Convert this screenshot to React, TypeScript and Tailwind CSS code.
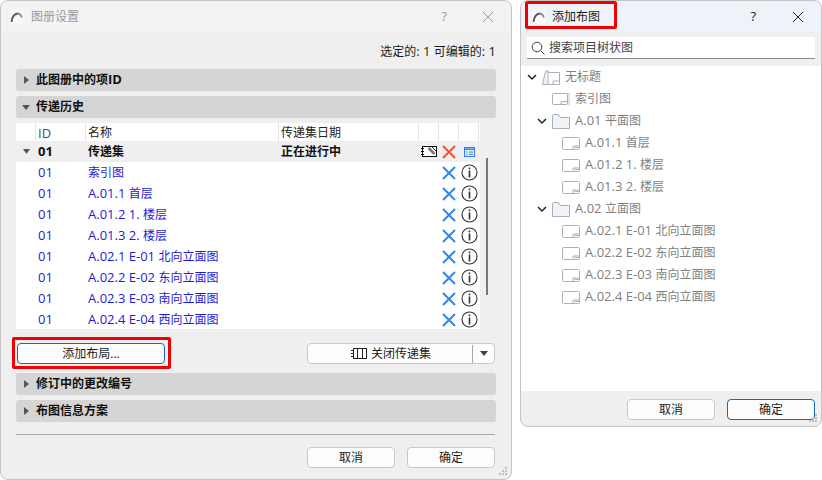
import React from "react";

const FONT = '"Open Sans", "Noto Sans CJK SC", sans-serif';

function Mixed({ text }: { text: string }) {
  const parts = text.split(/([\x00-\x7f]+)/).filter(Boolean);
  return (
    <>
      {parts.map((p, i) =>
        /^[\x00-\x7f]+$/.test(p) ? (
          <span key={i} className="text-[13px] leading-none">{p}</span>
        ) : (
          <span key={i}>{p}</span>
        )
      )}
    </>
  );
}

function Logo() {
  return (
    <svg width="14" height="14" viewBox="0 0 14 14" className="shrink-0">
      <rect width="14" height="14" rx="2" fill="#f8f8fb" />
      <path d="M7 3.500c2.500 0 4.200 1.500 4.800 4" fill="none" stroke="#8a8a8a" strokeWidth="1.800" />
      <path d="M1.500 12C2 7.500 4 4 7.500 3.500" fill="none" stroke="#555" strokeWidth="1.800" />
    </svg>
  );
}

function TitleBar({ title, active }: { title: string; active?: boolean }) {
  return (
    <div className={`flex h-[31px] shrink-0 items-center ${active ? "bg-[#eef2f9] text-[#1c1c1c]" : "bg-[#f3f3f3] text-[#9a9a9a]"}`}>
      <div className={active ? "ml-[11px]" : "ml-[9px]"}>
        <Logo />
      </div>
      <span className={`${active ? "ml-[6px]" : "ml-[7px]"} text-[12px]`}>{title}</span>
      <span className={`ml-auto text-[13px] ${active ? "mr-[36px] text-[#222]" : "mr-[35px] text-[#999]"}`}>?</span>
      <svg width="12" height="12" viewBox="0 0 12 12" className="mr-[17px]">
        <path d="M1 1l10 10M11 1L1 11" stroke={active ? "#222" : "#999"} strokeWidth="1" />
      </svg>
    </div>
  );
}

function Btn({ label, primary, w = "w-[88px]" }: { label: string; primary?: boolean; w?: string }) {
  return (
    <button
      className={`flex h-[21px] ${w} items-center justify-center rounded-[4px] border bg-[#fdfdfd] text-[12px] text-[#1a1a1a] ${
        primary ? "border-[#0f6cbd]" : "border-[#c9c9c9]"
      }`}
    >
      {label}
    </button>
  );
}

function Section({ label, open, className = "" }: { label: string; open?: boolean; className?: string }) {
  return (
    <div className={`flex h-[22px] items-center rounded-[3px] bg-[#d5d5d5] ${className}`}>
      {open ? (
        <svg width="8" height="5" viewBox="0 0 8 5" className="ml-[6px] mr-[6px]">
          <path d="M0 0h8L4 5z" fill="#555" />
        </svg>
      ) : (
        <svg width="5" height="8" viewBox="0 0 5 8" className="ml-[8px] mr-[7px]">
          <path d="M0 0l5 4-5 4z" fill="#555" />
        </svg>
      )}
      <span className="text-[12px] font-bold text-[#111]"><Mixed text={label} /></span>
    </div>
  );
}

function XIcon({ color }: { color: string }) {
  return (
    <svg width="14" height="14" viewBox="0 0 14 14">
      <path d="M1 1l12 12M13 1L1 13" stroke={color} strokeWidth="2" />
    </svg>
  );
}

function InfoIcon() {
  return (
    <svg width="17" height="17" viewBox="0 0 17 17">
      <circle cx="8.500" cy="8.500" r="7.500" fill="none" stroke="#333" strokeWidth="1.100" />
      <rect x="7.700" y="3.500" width="1.600" height="1.800" fill="#333" />
      <rect x="7.700" y="6.500" width="1.600" height="7" fill="#333" />
    </svg>
  );
}

const rows = [
  "索引图",
  "A.01.1 首层",
  "A.01.2 1. 楼层",
  "A.01.3 2. 楼层",
  "A.02.1 E-01 北向立面图",
  "A.02.2 E-02 东向立面图",
  "A.02.3 E-03 南向立面图",
  "A.02.4 E-04 西向立面图",
];

function Table() {
  return (
    <div className="relative mt-[5px] h-[206px] w-[464px] bg-white text-[12px]">
      <div className="flex h-[18px] items-center text-[#222]">
        <div className="h-full w-[20px] border-r border-[#e6e6e6]" />
        <div className="flex h-full w-[50px] items-center border-r border-[#e6e6e6] pl-[2px] pt-[2px] text-[#33557a]"><Mixed text="ID" /></div>
        <div className="flex h-full w-[193px] items-center border-r border-[#e6e6e6] pl-[2px] pt-[2px]">名称</div>
        <div className="flex h-full w-[140px] items-center border-r border-[#e6e6e6] pl-[2px] pt-[2px]">传递集日期</div>
        <div className="h-full w-[20px] border-r border-[#e6e6e6]" />
        <div className="h-full w-[20px] border-r border-[#e6e6e6]" />
        <div className="h-full w-[20px] border-r border-[#e6e6e6]" />
      </div>
      <div className="flex h-[21px] items-center bg-[#efefef] font-bold text-[#111]">
        <div className="flex w-[20px] justify-center">
          <svg width="7" height="5" viewBox="0 0 7 5"><path d="M0 0h7L3.500 5z" fill="#555" /></svg>
        </div>
        <div className="w-[50px] pl-[2px]"><Mixed text="01" /></div>
        <div className="w-[193px] pl-[2px]">传递集</div>
        <div className="w-[140px] pl-[2px]">正在进行中</div>
        <div className="flex w-[20px] justify-center">
          <svg width="16" height="11" viewBox="0 0 16 11">
            <rect x="1.500" y=".5" width="14" height="10" fill="#fff" stroke="#111" />
            <path d="M0 2.500h3M0 5.500h3M0 8.500h3" stroke="#111" />
            <path d="M7.500 2l6 6" stroke="#777" strokeWidth="2.500" />
            <path d="M11 1l4 4" stroke="#222" strokeWidth="1" />
          </svg>
        </div>
        <div className="flex w-[20px] justify-center"><XIcon color="#f4522b" /></div>
        <div className="flex w-[20px] justify-center">
          <svg width="11" height="10" viewBox="0 0 11 10">
            <rect x=".5" y=".5" width="10" height="9" fill="#eaf2ff" stroke="#2f7de8" />
            <path d="M0 2.200h11" stroke="#2f7de8" strokeWidth="1.500" />
            <path d="M2 5h1.500M5 5h4M2 7.300h1.500M5 7.300h4" stroke="#2f7de8" />
          </svg>
        </div>
      </div>
      {rows.map((r) => (
        <div key={r} className="flex h-[21px] items-center text-[#1c1cd8]">
          <div className="w-[20px]" />
          <div className="w-[50px] pl-[2px]"><Mixed text="01" /></div>
          <div className="w-[353px] pl-[2px]"><Mixed text={r} /></div>
          <div className="flex w-[20px] justify-center"><XIcon color="#2f86f0" /></div>
          <div className="flex w-[20px] justify-center"><InfoIcon /></div>
        </div>
      ))}
      <div className="absolute left-[470px] top-[35px] h-[137px] w-[2px] bg-[#777]" />
    </div>
  );
}

function SheetIcon() {
  return (
    <svg width="18" height="14" viewBox="0 0 18 14" className="shrink-0">
      <rect x=".5" y="1.500" width="17" height="12" rx="1" fill="#fff" stroke="#a9b0ba" />
      <path d="M11 13.500V10h6.500M12.500 11.500h5" fill="none" stroke="#a9b0ba" />
    </svg>
  );
}

function IndexIcon() {
  return (
    <svg width="18" height="15" viewBox="0 0 18 15" className="shrink-0">
      <path d="M2 1.500h15v12" fill="none" stroke="#c5c9cf" />
      <rect x=".5" y="1.500" width="15" height="11" rx="1" fill="#fff" stroke="#a9b0ba" />
      <path d="M9 12.500V9.500h6.500" fill="none" stroke="#a9b0ba" />
    </svg>
  );
}

function FolderIcon() {
  return (
    <svg width="18" height="15" viewBox="0 0 18 15" className="shrink-0">
      <path d="M.5 14.500V1.500a1 1 0 011-1h5l2 3h9v11z" fill="#eff3f8" stroke="#a9b0ba" />
    </svg>
  );
}

function ProjectIcon() {
  return (
    <svg width="18" height="15" viewBox="0 0 18 15" className="shrink-0">
      <path d="M.5 14.500l3-13L6 .5v14z" fill="#eff3f8" stroke="#a9b0ba" />
      <path d="M6 2.500h11.500v12H.5M11 14.500V11h6.500" fill="none" stroke="#a9b0ba" />
    </svg>
  );
}

function Chevron() {
  return (
    <svg width="10" height="7" viewBox="0 0 10 7" className="shrink-0">
      <path d="M1 1l4 4 4-4" fill="none" stroke="#222" strokeWidth="1.500" />
    </svg>
  );
}

function TreeRow({ depth, icon, label, chevron }: { depth: number; icon: React.ReactNode; label: string; chevron?: boolean }) {
  const indent = ["pl-[6px]", "pl-[16px]", "pl-[26px]", "pl-[36px]"][depth];
  return (
    <div className={`flex h-[22px] items-center ${indent}`}>
      {chevron ? <Chevron /> : <span className="w-[10px] shrink-0" />}
      <span className="ml-[5px] flex">{icon}</span>
      <span className="ml-[5px] whitespace-nowrap text-[12px] text-[#7f7f7f]"><Mixed text={label} /></span>
    </div>
  );
}

export default function App() {
  return (
    <div className="flex h-[480px] w-[822px] items-start overflow-hidden bg-white" style={{ fontFamily: FONT }}>
      {/* Left dialog */}
      <div className="relative flex h-[480px] w-[512px] shrink-0 flex-col overflow-hidden rounded-[8px] border border-[#c4c4c4] bg-[#efefef]">
        <TitleBar title="图册设置" />
        <div className="flex flex-1 flex-col pl-[15px] pr-[15px]">
          <div className="mt-[12px] h-[25px] text-right text-[12px] leading-[16px] text-[#1a1a1a]"><Mixed text="选定的: 1 可编辑的: 1" /></div>
          <Section label="此图册中的项ID" />
          <Section label="传递历史" open className="mt-[5px]" />
          <Table />
          <div className="mt-[14px] flex h-[21px] items-center justify-between pr-px">
            <div className="ml-px"><Btn label="添加布局..." primary w="w-[148px]" /></div>
            <div className="flex h-[21px] w-[188px] items-center rounded-[4px] border border-[#c9c9c9] bg-[#fdfdfd] text-[12px] text-[#1a1a1a]">
              <div className="flex flex-1 items-center justify-center border-r border-[#a8a8a8] pl-[2px]">
                <svg width="16" height="11" viewBox="0 0 16 11" className="mr-[4px]">
                  <rect x="2.500" y=".5" width="13" height="10" fill="none" stroke="#222" />
                  <path d="M0 2.500h3M0 5.500h3M0 8.500h3M6.500 0v11M11.500 0v11" stroke="#222" />
                </svg>
                关闭传递集
              </div>
              <div className="flex w-[21px] justify-center">
                <svg width="8" height="5" viewBox="0 0 8 5"><path d="M0 0h8L4 5z" fill="#444" /></svg>
              </div>
            </div>
          </div>
          <Section label="修订中的更改编号" className="mt-[9px]" />
          <Section label="布图信息方案" className="mt-[5px]" />
          <div className="mt-[12px] h-px w-[479px] bg-[#a9a9a9]" />
          <div className="mt-[12px] flex justify-end gap-[12px] pr-px">
            <Btn label="取消" />
            <Btn label="确定" />
          </div>
        </div>
        <div className="absolute left-[11px] top-[336px] h-[32px] w-[159px] rounded-[2px] border-[3px] border-[#f00000]" />
        <Grip />
      </div>

      {/* Right dialog */}
      <div className="relative ml-[8px] flex h-[427px] w-[302px] shrink-0 flex-col overflow-hidden rounded-[8px] border border-[#c4c4c4] bg-[#efefef]">
        <TitleBar title="添加布图" active />
        <div className="flex h-[34px] shrink-0 items-start px-[6px] pt-[5px]">
          <div className="flex h-[22px] w-[288px] items-center border-b border-[#8a8a8a] bg-white pl-[4px]">
            <svg width="14" height="14" viewBox="0 0 14 14">
              <circle cx="6" cy="6" r="4.800" fill="none" stroke="#444" />
              <path d="M9.500 9.500l4 4" stroke="#444" />
            </svg>
            <span className="ml-[4px] text-[12px] text-[#444]">搜索项目树状图</span>
          </div>
        </div>
        <div className="h-[325px] shrink-0 bg-white">
          <TreeRow depth={0} chevron icon={<ProjectIcon />} label="无标题" />
          <TreeRow depth={1} icon={<IndexIcon />} label="索引图" />
          <TreeRow depth={1} chevron icon={<FolderIcon />} label="A.01 平面图" />
          <TreeRow depth={2} icon={<SheetIcon />} label="A.01.1 首层" />
          <TreeRow depth={2} icon={<SheetIcon />} label="A.01.2 1. 楼层" />
          <TreeRow depth={2} icon={<SheetIcon />} label="A.01.3 2. 楼层" />
          <TreeRow depth={1} chevron icon={<FolderIcon />} label="A.02 立面图" />
          <TreeRow depth={2} icon={<SheetIcon />} label="A.02.1 E-01 北向立面图" />
          <TreeRow depth={2} icon={<SheetIcon />} label="A.02.2 E-02 东向立面图" />
          <TreeRow depth={2} icon={<SheetIcon />} label="A.02.3 E-03 南向立面图" />
          <TreeRow depth={2} icon={<SheetIcon />} label="A.02.4 E-04 西向立面图" />
        </div>
        <div className="flex flex-1 items-start justify-end gap-[12px] pr-[6px] pt-[8px]">
          <Btn label="取消" />
          <Btn label="确定" primary />
        </div>
        <div className="absolute left-[4px] top-[0px] h-[28px] w-[92px] rounded-[2px] border-[3px] border-[#f00000]" />
        <Grip />
      </div>
    </div>
  );
}

function Grip() {
  return (
    <svg width="9" height="9" viewBox="0 0 9 9" className="absolute bottom-[3px] right-[3px]">
      <path d="M6 0h2v2H6zM3 3h2v2H3zM6 3h2v2H6zM0 6h2v2H0zM3 6h2v2H3zM6 6h2v2H6z" fill="#c0c0c0" />
    </svg>
  );
}
